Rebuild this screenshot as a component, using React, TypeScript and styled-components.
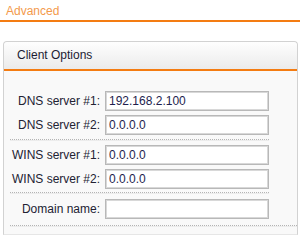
import React from "react";
import styled, { createGlobalStyle } from "styled-components";

const Global = createGlobalStyle`
  html, body { margin: 0; padding: 0; background: #ffffff; }
  body { font-family: "Liberation Sans", Arial, sans-serif; font-size: 12px; }
`;

const Page = styled.div`
  width: 300px;
  height: 240px;
  overflow: hidden;
  background: #ffffff;
`;

const TitleBar = styled.div`
  height: 22px;
  padding: 4px 6px 0;
  box-sizing: border-box;
  line-height: 14px;
  font-size: 12px;
  color: #f39a4c;
  border-bottom: 2px solid #f47c12;
`;

const Panel = styled.div`
  margin: 19px 2px 0 3px;
  border: 1px solid #d2d2d2;
  border-bottom-color: #e6e6e6;
  border-radius: 4px 4px 0 0;
  background: #f9f9f9;
`;

const PanelHeader = styled.div`
  height: 27px;
  line-height: 27px;
  padding-left: 13px;
  font-size: 12px;
  color: #1c1c33;
  border-radius: 4px 4px 0 0;
  background: linear-gradient(#fefefe, #ebebeb);
  border-bottom: 2px solid #f47c12;
`;

const Body = styled.div`
  padding: 20px 0 8px 6px;
`;

const Group = styled.div<{ $full?: boolean; $top: number; $bottom: number }>`
  display: grid;
  grid-template-columns: 90px 164px;
  column-gap: 5px;
  row-gap: 4px;
  align-items: center;
  width: ${(p) => (p.$full ? "auto" : "259px")};
  padding-top: ${(p) => p.$top}px;
  padding-bottom: ${(p) => p.$bottom}px;
  border-bottom: 1px dotted #b4b4b4;
  box-shadow: 0 1px 0 #ececec;
`;

const Label = styled.label`
  text-align: right;
  white-space: nowrap;
  color: #222233;
  font-size: 12px;
`;

const Field = styled.input`
  box-sizing: border-box;
  height: 20px;
  width: 164px;
  margin: 0;
  padding: 0 3px;
  border: 1px solid #b8b8b8;
  box-shadow: inset 0 0 0 1px #d8d8d8;
  background: #ffffff;
  font-family: "Liberation Sans", Arial, sans-serif;
  font-size: 12px;
  color: #1e1e4e;
  outline: none;
`;

type Row = { label: string; value: string };

const groups: { rows: Row[]; top: number; bottom: number; full?: boolean }[] = [
  {
    rows: [
      { label: "DNS server #1:", value: "192.168.2.100" },
      { label: "DNS server #2:", value: "0.0.0.0" },
    ],
    top: 0,
    bottom: 4,
  },
  {
    rows: [
      { label: "WINS server #1:", value: "0.0.0.0" },
      { label: "WINS server #2:", value: "0.0.0.0" },
    ],
    top: 5,
    bottom: 3,
  },
  {
    rows: [{ label: "Domain name:", value: "" }],
    top: 6,
    bottom: 6,
    full: true,
  },
];

export default function App() {
  return (
    <Page>
      <Global />
      <TitleBar>Advanced</TitleBar>
      <Panel>
        <PanelHeader>Client Options</PanelHeader>
        <Body>
          {groups.map((g, i) => (
            <Group key={i} $top={g.top} $bottom={g.bottom} $full={g.full}>
              {g.rows.map((r) => (
                <React.Fragment key={r.label}>
                  <Label>{r.label}</Label>
                  <Field defaultValue={r.value} readOnly />
                </React.Fragment>
              ))}
            </Group>
          ))}
        </Body>
      </Panel>
    </Page>
  );
}
